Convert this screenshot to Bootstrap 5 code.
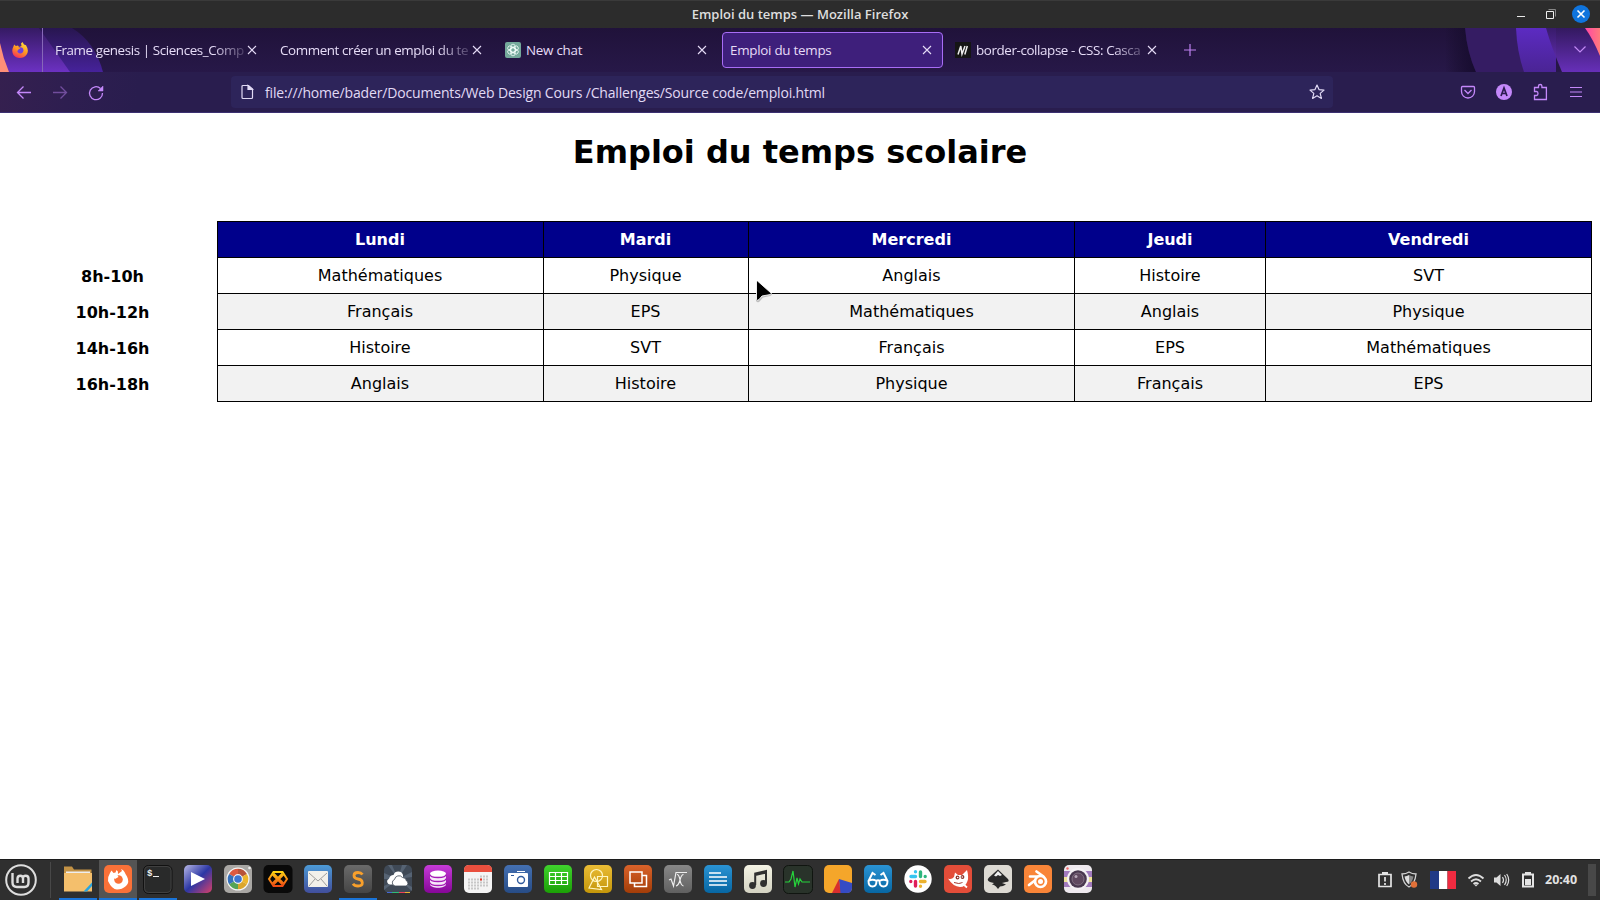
<!DOCTYPE html>
<html lang="fr">
<head>
<meta charset="utf-8">
<title>Emploi du temps</title>
<link href="https://cdn.jsdelivr.net/npm/bootstrap@5.3.0/dist/css/bootstrap.min.css" rel="stylesheet">
<style>
body{width:1600px;height:900px;overflow:hidden;background:#fff;color:#000;font-family:"Open Sans","Noto Sans",sans-serif}
svg{display:block;flex:none}
.titlebar{height:28px;background:#2c2c2c;border-top:1px solid #3a3a3a;display:grid;grid-template-columns:1fr auto 1fr}
.titlebar .caption{font-size:13px;font-weight:600;color:#dedede;line-height:26px}
.tabstrip{height:44px;background:linear-gradient(#20123a,#271848);color:#e6dcf7}
.tabstrip .pinned{width:43px;border-right:1px solid #8667b8}
.tab-item{width:221px;height:36px;border:1px solid transparent;border-radius:4px;padding:0 10px 0 7px;font-size:13.4px;letter-spacing:-.27px}
.tab-item.current{background:#3e1f7b;border-color:#a86df5}
.tab-item .label-text{white-space:nowrap;line-height:34px;flex:1 1 0;min-width:0}
.tab-item .long{letter-spacing:-.4px}
.fade-end{-webkit-mask-image:linear-gradient(90deg,#000 calc(100% - 34px),rgba(0,0,0,.12));mask-image:linear-gradient(90deg,#000 calc(100% - 34px),rgba(0,0,0,.12))}
.toolbar{height:41px;background:linear-gradient(100deg,#35204f 0,#2e1e50 70px,#291d4e 140px);border-bottom:1px solid #3c3072}
.urlbar{width:1102px;height:32px;background:#2d245a;border-radius:4px;color:#e1daf5;font-size:14px;letter-spacing:-.165px}
.content-area{height:746px;padding:0 8px;font-family:"DejaVu Sans",sans-serif}
.content-area h1{font-size:32px;font-weight:700;line-height:37px;padding-top:21px;margin:0 0 50px}
.schedule{border-collapse:collapse;table-layout:fixed;width:1584px;font-size:16px;line-height:19px;text-align:center}
.schedule tr{height:36px}
.schedule th,.schedule td{padding:0}
.schedule td,.schedule thead th.day{border:1px solid #000;padding-bottom:1px}
.schedule tr>:nth-child(2),.schedule tr>:nth-child(3){padding-right:1px}
.schedule .day{background:#00008b;color:#fff}
.schedule tbody th{padding-top:1px}
.schedule tbody tr:nth-child(even) td{background:#f2f2f2}
.pointer{left:755px;top:280px}
.taskbar{height:41px;background:#2f2f2f;border-top:1px solid #1c1c1c}
.task{width:38px;height:40px;border-bottom:2px solid transparent;padding-top:5px}
.task.open{border-color:#1a74d8}
.task.focus{background:#545454}
.clock{font-size:12.5px;font-weight:700;color:#e2e2e2;width:35px;padding-top:1px}
.edge{width:8px;height:32px;background:#484848}
</style>
</head>
<body class="d-flex flex-column position-relative">
<svg width="0" height="0" class="position-absolute">
<defs>
<symbol id="x" viewBox="0 0 10 10"><path d="M1 1l8 8M9 1l-8 8" stroke="#e6dcf7" stroke-width="1.1" fill="none"/></symbol>
<linearGradient id="la" x2="0" y2="1"><stop stop-color="#351a63"/><stop offset="1" stop-color="#6c31c2"/></linearGradient>
<linearGradient id="lb" x2="0" y2="1"><stop stop-color="#281650"/><stop offset="1" stop-color="#46229a"/></linearGradient>
<linearGradient id="lc" x2="0" y2="1"><stop stop-color="#5c2bc2"/><stop offset="1" stop-color="#4a2494"/></linearGradient>
<linearGradient id="ld"><stop stop-color="#ff45a5"/><stop offset="1" stop-color="#ff7b7c"/></linearGradient>
<linearGradient id="le" x1=".8" y1="0" x2=".3" y2="1"><stop stop-color="#ffe640"/><stop offset=".5" stop-color="#ff9a20"/><stop offset="1" stop-color="#f5305a"/></linearGradient>
<linearGradient id="sh"><stop stop-color="#130a24" stop-opacity="0"/><stop offset="1" stop-color="#170c30"/></linearGradient>
<linearGradient id="g1" x2="1" y2="1"><stop stop-color="#b8b8e6"/><stop offset=".5" stop-color="#2c37a5"/><stop offset="1" stop-color="#d9406a"/></linearGradient>
<linearGradient id="g2" x2="0" y2="1"><stop stop-color="#4c9ad6"/><stop offset="1" stop-color="#414e9c"/></linearGradient>
<linearGradient id="g3" x2="0" y2="1"><stop stop-color="#6a6a6a"/><stop offset="1" stop-color="#454545"/></linearGradient>
<linearGradient id="g4" x2="0" y2="1"><stop stop-color="#c63bd8"/><stop offset="1" stop-color="#860698"/></linearGradient>
<linearGradient id="g5" x2="0" y2="1"><stop stop-color="#4470b2"/><stop offset="1" stop-color="#274c86"/></linearGradient>
<linearGradient id="g6" x2="0" y2="1"><stop stop-color="#3fd22d"/><stop offset="1" stop-color="#1ba006"/></linearGradient>
<linearGradient id="g7" x2="0" y2="1"><stop stop-color="#eabc35"/><stop offset="1" stop-color="#c4960a"/></linearGradient>
<linearGradient id="g8" x2="0" y2="1"><stop stop-color="#d9622a"/><stop offset="1" stop-color="#a33d08"/></linearGradient>
<linearGradient id="g9" x2="0" y2="1"><stop stop-color="#888"/><stop offset="1" stop-color="#606060"/></linearGradient>
<linearGradient id="g10" x2="0" y2="1"><stop stop-color="#2a93d3"/><stop offset="1" stop-color="#0767a3"/></linearGradient>
<linearGradient id="g11" x2="0" y2="1"><stop stop-color="#f4f3e4"/><stop offset="1" stop-color="#d3d2c2"/></linearGradient>
<linearGradient id="g12" gradientUnits="userSpaceOnUse" x1="0" y1="7" x2="0" y2="21"><stop stop-color="#ffd414"/><stop offset="1" stop-color="#f04a14"/></linearGradient>
</defs>
</svg>

<header class="titlebar flex-shrink-0">
 <span></span><span class="caption">Emploi du temps — Mozilla Firefox</span>
 <svg class="ms-auto" width="90" height="27" viewBox="1510 1 90 27"><path d="M1517 16.5h8" stroke="#e8e8e8"/><path d="M1548.500 9.500h7v7" stroke="#888" fill="none"/><path d="M1546.500 11.500h7v7h-7z" stroke="#eee" fill="none"/><circle cx="1581" cy="14" r="9" fill="#0f74dd"/><path d="M1577.500 10.500l7 7m0-7l-7 7" stroke="#fff" stroke-width="1.600"/></svg>
</header>

<nav class="tabstrip flex-shrink-0 position-relative d-flex align-items-center">
 <svg class="position-absolute top-0 start-0" width="130" height="44"><path d="M39 0h33q23 14 31 44H60z" fill="url(#lb)"/><path d="M0 0h39l31 44H0z" fill="url(#la)"/><path d="M0 15q3 15 9 29H0z" fill="#ff8f78"/></svg>
 <svg class="position-absolute top-0 end-0" width="160" height="44" viewBox="1440 0 160 44"><path d="M1445 0h20q2 24 11 44h-31z" fill="url(#sh)"/><path d="M1465 0h60v44h-49q-9-20-11-44z" fill="#351c63"/><path d="M1516 0h40v44h-32q-7-20-8-44z" fill="url(#lc)"/><path d="M1546 0h54v44h-38q-11-26-16-44z" fill="url(#la)" opacity=".92"/><path d="M1585 0h15v28q-7-17-15-28z" fill="url(#ld)"/><path d="M1574.500 18.500l5.500 5.500 5.500-5.500" fill="none" stroke="#c38af5" stroke-width="1.200"/></svg>
 <div class="pinned h-100 d-flex align-items-center position-relative">
  <svg style="margin-left:12px" width="16" height="16"><path d="M1.200 5l1-2.500 1.600 1.600L6 3.600 7 5 9.500 4 9 1.500 10.500 0l1.500 2.500 2 .8q3.500 5.500.5 9.500-2.500 3.200-6.700 3.200-4 0-6.300-3Q-.8 9 1.200 5z" fill="url(#le)"/><circle cx="8.300" cy="8.300" r="3.100" fill="#7040dd"/><path d="M3 5.500q3-1 5.500 1-2.500.3-2.800 2.500z" fill="#ff9a20"/></svg>
 </div>
 <div class="d-flex gap-1 position-relative ms-1">
  <div class="tab-item d-flex align-items-center"><span class="label-text long fade-end">Frame genesis | Sciences_Comp</span><svg width="10" height="10"><use href="#x"/></svg></div>
  <div class="tab-item d-flex align-items-center"><span class="label-text long fade-end">Comment créer un emploi du te</span><svg width="10" height="10"><use href="#x"/></svg></div>
  <div class="tab-item d-flex align-items-center"><svg style="margin-right:3px" width="18" height="16"><rect width="16" height="16" rx="2" fill="#74a99b"/><g fill="none" stroke="#eefaf6" stroke-width=".8"><rect x="5.800" y="2.200" width="4.400" height="8.600" rx="2.200"/><rect x="5.800" y="2.200" width="4.400" height="8.600" rx="2.200" transform="rotate(60 8 8)"/><rect x="5.800" y="2.200" width="4.400" height="8.600" rx="2.200" transform="rotate(120 8 8)"/><rect x="5.800" y="2.200" width="4.400" height="8.600" rx="2.200" transform="rotate(180 8 8)"/><rect x="5.800" y="2.200" width="4.400" height="8.600" rx="2.200" transform="rotate(240 8 8)"/><rect x="5.800" y="2.200" width="4.400" height="8.600" rx="2.200" transform="rotate(300 8 8)"/></g></svg><span class="label-text">New chat</span><svg width="10" height="10"><use href="#x"/></svg></div>
  <div class="tab-item current d-flex align-items-center"><span class="label-text">Emploi du temps</span><svg width="10" height="10"><use href="#x"/></svg></div>
  <div class="tab-item d-flex align-items-center"><svg style="margin-right:3px" width="18" height="16"><rect width="16" height="16" fill="#151515"/><path d="M3 12.500L5.800 4 7 12 10 4M9.800 12.500L12.300 4" fill="none" stroke="#eee" stroke-width="1.500"/></svg><span class="label-text long fade-end">border-collapse - CSS: Casca</span><svg width="10" height="10"><use href="#x"/></svg></div>
 </div>
 <svg class="position-relative" style="margin-left:15px" width="14" height="14"><path d="M7 1v12M1 7h12" stroke="#bd80f0" stroke-width="1.200"/></svg>
</nav>

<div class="toolbar flex-shrink-0 d-flex align-items-center">
 <svg width="231" height="40" viewBox="0 72 231 40" fill="none" stroke="#c488fa" stroke-width="1.300"><path d="M31 92.500H17.500m6-6l-6 6 6 6"/><path d="M53 92.500h13.500m-6-6l6 6-6 6" opacity=".45"/><path d="M100.500 88.500a6.500 6.500 0 1 0 2 4.500"/><path d="M103 86v5h-5z" fill="#c488fa" stroke-width=".5"/></svg>
 <div class="urlbar d-flex align-items-center">
  <svg class="ms-2" width="26" height="16" fill="none" stroke="#e1daf5" stroke-width="1.200"><path d="M4 1.500h5.500L13.500 5v8.500q0 1-1 1H4q-1 0-1-1v-11q0-1 1-1z"/><path d="M9 1.500V5.500h4.500z" fill="#e1daf5"/></svg>
  <span class="url">file:///home/bader/Documents/Web Design Cours /Challenges/Source code/emploi.html</span>
  <svg class="ms-auto me-2" width="16" height="16"><path d="M8 1l2 4.600 5 .5-3.800 3.300 1.200 5L8 11.800l-4.400 2.600 1.200-5L1 6.100l5-.5z" fill="none" stroke="#e1daf5" stroke-width="1.200" stroke-linejoin="round"/></svg>
 </div>
 <svg class="ms-auto" width="160" height="40" viewBox="1440 72 160 40" fill="none" stroke="#c488fa" stroke-width="1.300"><path d="M1462.500 86.500h11q1 0 1 1v4a6.500 6.500 0 0 1-13 0v-4q0-1 1-1z"/><path d="M1464.500 90l3.500 3.500 3.500-3.500"/><circle cx="1504" cy="92" r="8" fill="#c488fa" stroke="none"/><path d="M1501 96l3-8 3 8m-5-2.500h4" stroke="#2c1c50" stroke-width="1.700"/><path d="M1534.500 99.500v-4h2q1.500 0 1.500-2t-1.500-2h-2v-4h4V86q0-1.500 1.700-1.500t1.700 1.500v1.500h4.500v12z"/><path d="M1570 87.500h12m-12 4.500h12m-12 4.500h12" stroke-width="1.100"/></svg>
</div>

<main class="content-area flex-shrink-0">
 <h1 class="text-center">Emploi du temps scolaire</h1>
 <table class="schedule">
  <colgroup><col style="width:209.5px"><col style="width:326px"><col style="width:205px"><col style="width:326px"><col style="width:191px"><col style="width:326px"></colgroup>
  <thead><tr><th></th><th class="day">Lundi</th><th class="day">Mardi</th><th class="day">Mercredi</th><th class="day">Jeudi</th><th class="day">Vendredi</th></tr></thead>
  <tbody>
  <tr><th>8h-10h</th><td>Mathématiques</td><td>Physique</td><td>Anglais</td><td>Histoire</td><td>SVT</td></tr>
  <tr><th>10h-12h</th><td>Français</td><td>EPS</td><td>Mathématiques</td><td>Anglais</td><td>Physique</td></tr>
  <tr><th>14h-16h</th><td>Histoire</td><td>SVT</td><td>Français</td><td>EPS</td><td>Mathématiques</td></tr>
  <tr><th>16h-18h</th><td>Anglais</td><td>Histoire</td><td>Physique</td><td>Français</td><td>EPS</td></tr>
  </tbody>
 </table>
</main>

<svg class="pointer position-absolute" width="20" height="24"><path d="M1 3v18q2 2.500 4 0l3-3.500 7-1.500q3-1 1-3z" fill="#888" opacity=".5"/><path d="M1.500 1v18.500q1 1.500 2.500 0l3-3.500 8.500-1.500q1.500-.5.500-1.500L2.500 1z" fill="#000" stroke="#fff" stroke-width=".9"/></svg>

<footer class="taskbar flex-shrink-0 d-flex align-items-center">
 <svg width="58" height="40"><g fill="none" stroke="#dedede"><circle cx="21" cy="20" r="14.800" stroke-width="2"/><path d="M12.500 13v9.500q0 4.500 4.500 4.500h7.500q4 0 4-4.500V18.500q0-2.800-2.800-2.800T23 18.500V23m0-4.500q0-2.800-2.700-2.800T17.500 18.500V23" stroke-width="2.400"/></g><path d="M50.500 2v36" stroke="#484848"/></svg>
 <div class="d-flex ms-0" style="gap:2px;padding-left:1px">
  <div class="task open d-flex justify-content-center"><svg width="28" height="28"><path d="M0 1.500h8l2 3h17.500V12H0z" fill="#c39245"/><path d="M2 6.500h24v4H2z" fill="#eee"/><path d="M0 8h28v18.500H0z" fill="#f4bf6c"/><path d="M28 17.500L19.500 26.500h3.500l5-5.500z" fill="#27a5e0"/></svg></div>
  <div class="task open focus d-flex justify-content-center"><svg width="28" height="28"><rect width="28" height="28" rx="5" fill="#fa7138"/><path d="M6 8l1.500-2.500 2 2.500 2-.5 1-2.500q2 1 1.500 4l4-3-1-2q3 1 4.500 5l1.500 2.500q3 6-1 9.500T13 24.500 4 16q-.5-4 2-8z" fill="#fff"/><circle cx="14.500" cy="14.500" r="4.300" fill="#fa7138"/><path d="M8 10.500l5-1 1.500 2.500-3.500 2z" fill="#fff"/></svg></div>
  <div class="task open d-flex justify-content-center"><svg width="30" height="29"><rect x=".5" y=".5" width="28.500" height="28" rx="5" fill="#292a2a" stroke="#111"/><rect x="1.500" y="1.500" width="26.500" height="26" rx="4" fill="none" stroke="#404040"/><text x="4" y="11" font-family="Liberation Mono" font-size="9" font-weight="700" fill="#eee">$</text><path d="M10 11.500h6" stroke="#eee"/></svg></div>
  <div class="task d-flex justify-content-center"><svg width="28" height="28"><rect width="28" height="28" rx="5" fill="url(#g1)"/><path d="M7 7l14 7-14 7z" fill="#fff"/></svg></div>
  <div class="task d-flex justify-content-center"><svg width="28" height="28"><rect width="28" height="28" rx="5" fill="#a9a7a4"/><circle cx="14" cy="14" r="11.500" fill="#f5f5f5"/><g fill="none" stroke-width="5.500"><path d="M7.500 10.250A7.500 7.500 0 0 1 14 6.500" stroke="#dd5a40"/><path d="M14 6.500A7.500 7.500 0 0 1 20.500 10.250" stroke="#b85339"/><path d="M20.500 10.250a7.500 7.500 0 0 1 0 7.500" stroke="#edb62c"/><path d="M20.500 17.750a7.500 7.500 0 0 1-6.500 3.750" stroke="#dba62c"/><path d="M14 21.500a7.500 7.500 0 0 1-6.500-3.750" stroke="#55a456"/><path d="M7.500 17.750a7.500 7.500 0 0 1 0-7.500" stroke="#3670ba"/></g><circle cx="14" cy="14" r="4.700" fill="#f4f4f4"/><circle cx="14" cy="14" r="3.800" fill="#3d75d2"/><circle cx="25.500" cy="3" r="1.300" fill="#eee"/></svg></div>
  <div class="task d-flex justify-content-center"><svg width="30" height="28"><rect x=".5" width="29" height="28" rx="5" fill="#090909"/><g fill="none" stroke="url(#g12)"><path d="M10.500 7h9l4.500 7-4.500 7h-9L6 14z" stroke-width="2"/><path d="M10 9l10 10m0-10L10 19" stroke-width="3.200"/></g></svg></div>
  <div class="task d-flex justify-content-center"><svg width="28" height="28"><rect width="28" height="28" rx="5" fill="url(#g2)"/><rect x="4" y="6" width="20" height="16" rx="1" fill="#f2f1ea"/><path d="M5 8l9 8 9-8M5 21l6-7m12 7l-6-7" fill="none" stroke="#888" stroke-width=".8"/></svg></div>
  <div class="task open d-flex justify-content-center"><svg width="28" height="28"><rect width="28" height="28" rx="5" fill="url(#g3)"/><path d="M18.500 9.500Q17 7.500 14 7.500q-4 0-4 3t4 3.500 4.300 3.700-4.300 3.300q-3.500 0-5-2.300" fill="none" stroke="#f9a02b" stroke-width="2.800"/></svg></div>
  <div class="task d-flex justify-content-center"><svg width="28" height="28"><rect width="28" height="28" rx="5" fill="#3f4956"/><path d="M14 14L4 0h4zm0 0L18 0h5zm0 0L28 7v5zm0 0L0 8v6zm0 0l14 8v4zM14 14L0 21v4z" fill="#566373"/><path d="M6 19.500a3 3 0 0 1-1-5.800A5 5 0 0 1 9.500 10 5 5 0 0 1 19 10v9.500z" fill="#fff"/><path d="M11 21a3.400 3.400 0 0 1-.5-6.500 4.500 4.500 0 0 1 8-2 4 4 0 0 1 4 3.500 2.700 2.700 0 0 1-.5 5z" fill="#fff" stroke="#3f4956" stroke-width=".8"/><path d="M3 27.500h5" stroke="#4468d4"/><path d="M8 27.500h7" stroke="#2ebd77"/><path d="M15 27.500h6" stroke="#eb4058"/><path d="M21 27.500h5" stroke="#e9b22f"/></svg></div>
  <div class="task d-flex justify-content-center"><svg width="28" height="28"><rect width="28" height="28" rx="5" fill="url(#g4)"/><path d="M6 9v10c0 5 16 5 16 0V9z" fill="#f7e9f9"/><ellipse cx="14" cy="8.500" rx="8" ry="3" fill="#fff"/><path d="M6 9.500c0 4 16 4 16 0M6 13.500c0 4 16 4 16 0m-16 4c0 4 16 4 16 0" fill="none" stroke="#a51bb7" stroke-width="1.300"/></svg></div>
  <div class="task d-flex justify-content-center"><svg width="28" height="28"><rect width="28" height="28" rx="5" fill="#f4f4f4"/><path d="M0 7V5q0-5 5-5h18q5 0 5 5v2z" fill="#e94f3e"/><g stroke="#c8c8c8" stroke-width="2" stroke-dasharray="2 1"><path d="M16 11.500h8M4 14.500h20M4 17.500h20M4 20.500h20M4 23.500h11"/></g><path d="M16 13.500h2v2h-2z" fill="#e83224"/></svg></div>
  <div class="task d-flex justify-content-center"><svg width="28" height="28"><rect width="28" height="28" rx="5" fill="url(#g5)"/><path d="M13 6.500h8" stroke="#fff"/><rect x="4" y="8" width="20" height="14" rx="1" fill="#fff"/><circle cx="17" cy="15" r="3.500" fill="none" stroke="#315b9d" stroke-width="1.400"/><path d="M7 10.500h3" stroke="#315b9d"/></svg></div>
  <div class="task d-flex justify-content-center"><svg width="28" height="28"><rect width="28" height="28" rx="5" fill="url(#g6)"/><path d="M5.500 7.500h18v12h-18zM5.500 11.500h18m-18 4h18M11.500 7.500v12m6-12v12" fill="none" stroke="#fff" stroke-width="1.200"/></svg></div>
  <div class="task d-flex justify-content-center"><svg width="28" height="28" fill="none" stroke="#fff6c0" stroke-width="1.200"><rect width="28" height="28" rx="5" fill="url(#g7)" stroke="none"/><circle cx="12.500" cy="10.500" r="6"/><path d="M13.500 11.500h10v10h-10zM10.500 12l7 12.500L5 23z"/></svg></div>
  <div class="task d-flex justify-content-center"><svg width="28" height="28" fill="none" stroke="#fff" stroke-width="1.500"><rect width="28" height="28" rx="5" fill="url(#g8)" stroke="none"/><path d="M6 7h12v11H6zM18 10.500h4.500v11h-12V18"/></svg></div>
  <div class="task d-flex justify-content-center"><svg width="28" height="28" fill="none" stroke="#eee" stroke-width="1.200"><rect width="28" height="28" rx="5" fill="url(#g9)" stroke="none"/><path d="M5 15l2-1 2.500 7 2.500-13.500h11M13 9.500q2 0 3 5.500t3.500 6M19.500 9.500q-2 0-3.500 5.500t-4 6"/></svg></div>
  <div class="task d-flex justify-content-center"><svg width="28" height="28"><rect width="28" height="28" rx="5" fill="url(#g10)"/><path d="M5 8h12M5 12h18M5 16h18M5 20h18" stroke="#fff" stroke-width="1.700"/></svg></div>
  <div class="task d-flex justify-content-center"><svg width="28" height="28"><rect width="28" height="28" rx="5" fill="url(#g11)"/><path d="M11.200 20V8.500L22 6v12.500M11.200 10L22 7.500" fill="none" stroke="#303030" stroke-width="2"/><circle cx="8.500" cy="20.500" r="3.400" fill="#303030"/><circle cx="19.500" cy="18.500" r="3.400" fill="#303030"/></svg></div>
  <div class="task d-flex justify-content-center"><svg width="30" height="29"><rect x=".5" y=".5" width="29" height="28" rx="5" fill="#29332a" stroke="#101510"/><path d="M2 17h4l2-3 2-8 2 16 2-9 1.500 6 1.500-5 2 3 1 0h7" fill="none" stroke="#27d33c" stroke-width="1.200"/></svg></div>
  <div class="task d-flex justify-content-center"><svg width="28" height="28"><rect width="28" height="28" rx="5" fill="#f5a62a"/><path d="M15 14l13 4v5q0 5-5 5H16z" fill="#354bc4"/><path d="M15 14L8 28h8.500z" fill="#d82e2e"/></svg></div>
  <div class="task d-flex justify-content-center"><svg width="28" height="28" fill="none" stroke="#fff" stroke-width="1.900"><rect width="28" height="28" rx="5" fill="url(#g10)" stroke="none"/><path d="M4.500 16q4-2.500 8 0 0 5.500-4 5.500t-4-5.500zM15.500 16q4-2.500 8 0 0 5.500-4 5.500t-4-5.500zM12 16q2-1.500 4 0M4.500 16L8.500 8l3 2M23.500 16L19.500 8l-3 2"/></svg></div>
  <div class="task d-flex justify-content-center"><svg width="28" height="28" fill="none" stroke-width="3.400" stroke-linecap="round"><circle cx="14" cy="14" r="13.700" fill="#fff"/><path d="M11.500 11.500H7M11.500 6.800v0" stroke="#36c5f0"/><path d="M16.500 11.500V7M21.200 11.500v0" stroke="#2eb67d"/><path d="M11.500 16.500V21M6.800 16.500v0" stroke="#e01e5a"/><path d="M16.500 16.500H21M16.500 21.200v0" stroke="#ecb22e"/></svg></div>
  <div class="task d-flex justify-content-center"><svg width="28" height="28"><rect width="28" height="28" rx="5" fill="#e34d39"/><path d="M4 13.500q3.500 1.500 6-1.500l1-4.500 3 2.500h4l5-5q2 7 .5 11-2 6-7.500 6-7-.500-12-8.500z" fill="#fff"/><circle cx="13.500" cy="12.500" r="1.900" fill="#8d342c"/><circle cx="18.500" cy="12" r="1.900" fill="#8d342c"/><circle cx="13.700" cy="12.500" r=".8" fill="#fff"/><circle cx="18.300" cy="12" r=".8" fill="#fff"/><path d="M10 17.500q5 2 9 0" fill="none" stroke="#a53a31"/><path d="M18 18l5 4.500" stroke="#fff" stroke-width="1.800"/></svg></div>
  <div class="task d-flex justify-content-center"><svg width="28" height="28"><rect width="28" height="28" rx="5" fill="#dddad3"/><path d="M14 4.500l10 9.500q2 3-2 3l-4 1 4 1.500q-3 2-6 2l-2 2.500-2-2.500q-2-2-4-2l2-1.500q-5-1-6-2.500-1-1 1-3z" fill="#292929"/><path d="M14 6l4 4-2 1-2-1-2 1.500-2-1z" fill="#eee"/></svg></div>
  <div class="task d-flex justify-content-center"><svg width="28" height="28"><rect width="28" height="28" rx="5" fill="#f98538"/><path d="M5 20l11-8.500M6 11.500h11M12.500 6.500l7 5" stroke="#fff" stroke-width="2.700" stroke-linecap="round"/><circle cx="16.500" cy="16.500" r="5.500" fill="#f98538" stroke="#fff" stroke-width="2.700"/><circle cx="16.500" cy="16.500" r="2.500" fill="#fff"/></svg></div>
  <div class="task d-flex justify-content-center"><svg width="28" height="28"><rect width="28" height="28" rx="5" fill="#eee9ee"/><path d="M0 6h28v16H0z" fill="#a27bbd"/><path d="M0 12h28v5H0z" fill="#f0e49a"/><circle cx="14" cy="14" r="11" fill="#f4f1f4"/><circle cx="14" cy="14" r="8.800" fill="#49384f"/><circle cx="14" cy="14" r="6" fill="#604960" stroke="#817082"/><circle cx="12" cy="11.500" r="1.500" fill="#b7a7b8"/><circle cx="3.500" cy="3.500" r="1.200" fill="#f36a6a"/></svg></div>
 </div>
 <svg class="ms-auto" width="175" height="40" viewBox="1370 860 175 40"><g fill="none" stroke="#e4e4e4" stroke-width="1.700"><path d="M1379 874.500h12v12h-12z"/><path d="M1385 877v4.500m0 1.500v2"/></g><path d="M1382 872h6v3h-6z" fill="#e4e4e4"/><path d="M1409 872q3 2 7 2-1 10-7 13-6-3-7-13 4 0 7-2z" fill="none" stroke="#d4d4d4" stroke-width="1.300"/><path d="M1409 875q-2 1.200-4.500 1.500 1 5.500 4.500 8z" fill="#ddd"/><path d="M1409 875q2 1.200 4.500 1.500-1 5.500-4.500 8z" fill="#888"/><circle cx="1414" cy="884.500" r="3.200" fill="#e07038"/><path d="M1430 871h9v18h-9z" fill="#213a86"/><path d="M1439 871h8.500v18h-8.500z" fill="#fff"/><path d="M1447.500 871h8.500v18h-8.500z" fill="#ef2b40"/><g fill="none" stroke="#ddd" stroke-width="1.800"><path d="M1468.500 878.500q7.500-7 15 0M1471 881.500q5-4.500 10 0M1473.500 884q2.500-2 5 0"/></g><path d="M1474 884.500h4l-2 2z" fill="#ddd"/><path d="M1494 877.500h2.500l4-3.500v12l-4-3.500h-2.500z" fill="#ddd"/><path d="M1502.500 877q2 3 0 6m2-8q3.500 5 0 10m2.200-11q4 6 0 12" fill="none" stroke="#ddd" stroke-width="1.200"/><path d="M1523 874.500h10v12h-10z" fill="none" stroke="#e4e4e4" stroke-width="2"/><path d="M1525 872h6v2h-6zM1525 879h6v6h-6z" fill="#e4e4e4"/></svg>
 <span class="clock text-nowrap">20:40</span>
 <div class="edge ms-2 me-1"></div>
</footer>
<script src="https://cdn.jsdelivr.net/npm/bootstrap@5.3.0/dist/js/bootstrap.bundle.min.js"></script>
</body>
</html>
